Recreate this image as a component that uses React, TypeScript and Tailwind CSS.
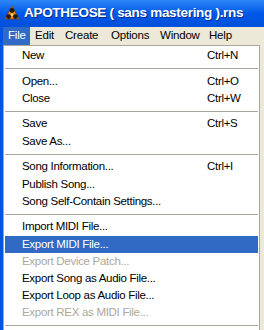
type Item = { label: string; shortcut?: string; disabled?: boolean; active?: boolean } | "sep";

const items: Item[] = [
  { label: "New", shortcut: "Ctrl+N" },
  "sep",
  { label: "Open...", shortcut: "Ctrl+O" },
  { label: "Close", shortcut: "Ctrl+W" },
  "sep",
  { label: "Save", shortcut: "Ctrl+S" },
  { label: "Save As..." },
  "sep",
  { label: "Song Information...", shortcut: "Ctrl+I" },
  { label: "Publish Song..." },
  { label: "Song Self-Contain Settings..." },
  "sep",
  { label: "Import MIDI File..." },
  { label: "Export MIDI File...", active: true },
  { label: "Export Device Patch...", disabled: true },
  { label: "Export Song as Audio File..." },
  { label: "Export Loop as Audio File..." },
  { label: "Export REX as MIDI File...", disabled: true },
  "sep",
];

const menus = [
  { name: "File", w: "w-[27px]" },
  { name: "Edit", w: "w-[30px]" },
  { name: "Create", w: "w-[46px]" },
  { name: "Options", w: "w-[49px]" },
  { name: "Window", w: "w-[49px]" },
  { name: "Help", w: "w-[40px]" },
];

function AppIcon() {
  return (
    <svg width="16" height="16" viewBox="0 0 16 16">
      <polygon points="8,1 15,14 1,14" fill="#f08a18" stroke="#7a3a00" strokeWidth="0.8" />
      <circle cx="8" cy="5.5" r="2.4" fill="#1a1a1a" />
      <circle cx="4.6" cy="11.6" r="2.4" fill="#1a1a1a" />
      <circle cx="11.4" cy="11.6" r="2.4" fill="#1a1a1a" />
      <circle cx="8" cy="9.8" r="1.2" fill="#ffd27a" />
    </svg>
  );
}

export default function App() {
  return (
    <div
      className="w-[264px] h-[330px] overflow-hidden flex flex-col bg-[#ECE9D8]"
      style={{ fontFamily: '"Liberation Sans", Arial, sans-serif' }}
    >
      {/* title bar */}
      <div className="h-[29px] flex items-center gap-[4px] pl-[4px] bg-gradient-to-b from-[#2e86f8] via-[#0058e8] to-[#0050da]">
        <AppIcon />
        <span className="whitespace-nowrap text-white font-bold text-[13.5px] tracking-[-0.3px] [text-shadow:1px_1px_0_#0a2a8a]">
          APOTHEOSE ( sans mastering ).rns
        </span>
      </div>

      <div className="flex flex-1">
        <div className="w-[3px] bg-[#0055E5]" />
        <div className="flex flex-col flex-1">
          {/* menu bar */}
          <div className="h-[18px] flex items-center text-[11.5px] tracking-[-0.2px] text-black">
            {menus.map((m, i) => (
              <div
                key={m.name}
                className={
                  m.w +
                  " h-full flex items-center pl-[5px] whitespace-nowrap " +
                  (i === 0 ? "bg-[#316AC5] text-white" : "")
                }
              >
                {m.name}
              </div>
            ))}
          </div>

          {/* dropdown */}
          <div className="flex-1 mr-[4px] border-l border-t border-r border-[#ACA899] bg-white pt-[1px] text-[11.5px] tracking-[-0.3px] text-black">
            {items.map((it, i) =>
              it === "sep" ? (
                <div key={i} className="h-[8.5px] flex flex-col justify-center px-[1px]">
                  <div className="h-px bg-[#ACA899]" />
                </div>
              ) : (
                <div
                  key={i}
                  className={
                    "h-[17.2px] mx-px grid grid-cols-[185px_1fr] items-center pl-[17px] " +
                    (it.active ? "bg-[#316AC5] text-white" : it.disabled ? "text-[#ACA899]" : "")
                  }
                >
                  <span className="whitespace-nowrap">{it.label}</span>
                  <span className="whitespace-nowrap">{it.shortcut ?? ""}</span>
                </div>
              )
            )}
          </div>
        </div>
      </div>
    </div>
  );
}
